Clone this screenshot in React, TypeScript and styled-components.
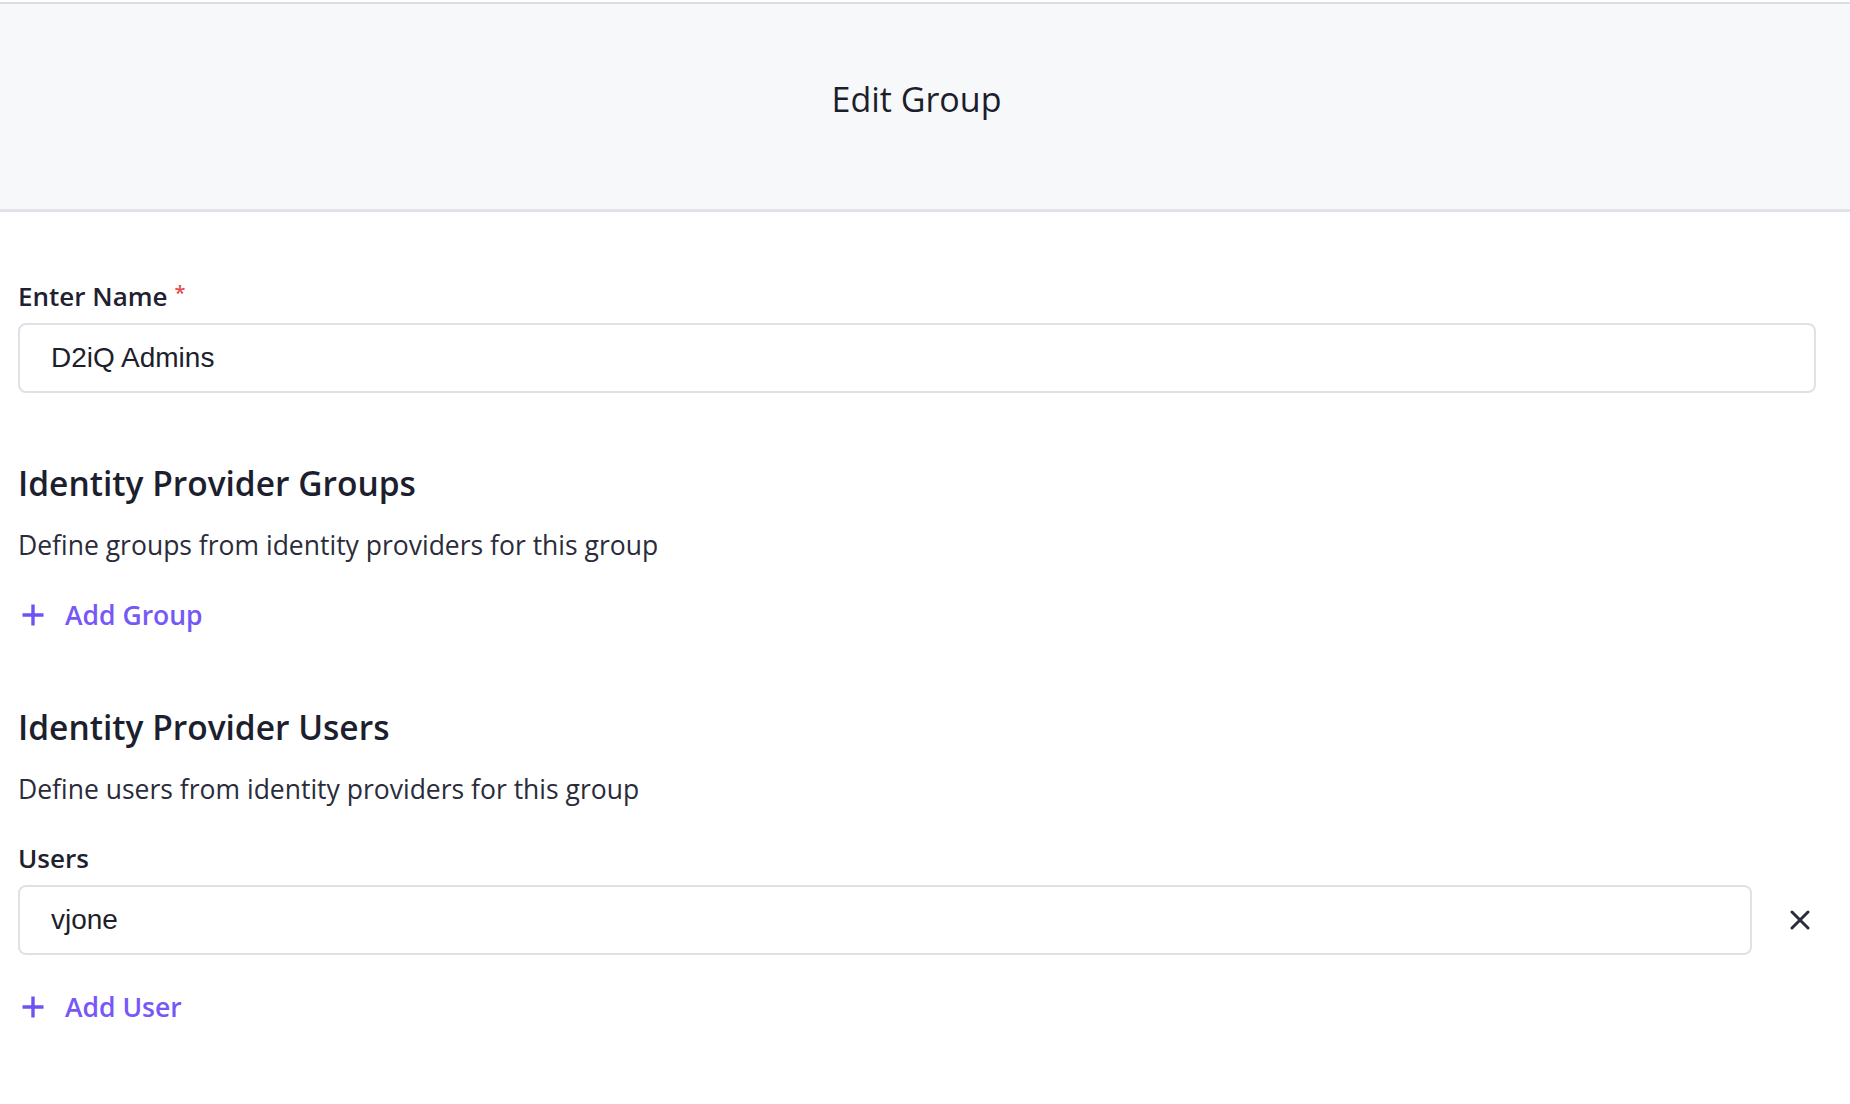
import React from "react";
import styled, { createGlobalStyle } from "styled-components";

const GlobalStyle = createGlobalStyle`
  html, body {
    margin: 0;
    padding: 0;
    background: #ffffff;
  }
  body {
    font-family: "Open Sans", "Noto Sans", sans-serif;
    color: #1d1f2e;
  }
  * { box-sizing: border-box; }
`;

const Page = styled.div`
  width: 1850px;
  min-height: 1104px;
  padding-top: 2px;
  background: #ffffff;
`;

const Header = styled.header`
  height: 210px;
  border-top: 2px solid #dcdee3;
  border-bottom: 3px solid #e0e2e7;
  background: #f7f8fa;
  display: flex;
  align-items: center;
  justify-content: center;
  padding: 0 17px 16px 0;
`;

const Title = styled.h1`
  margin: 0;
  font-size: 34px;
  font-weight: 400;
  line-height: 48px;
  color: #1c1e2d;
`;

const Form = styled.form`
  display: flex;
  flex-direction: column;
  padding: 64px 34px 0 18px;
`;

const Label = styled.label`
  display: block;
  font-size: 26px;
  font-weight: 600;
  line-height: 40px;
  color: #1f2130;
  margin-bottom: 7px;
`;

const Required = styled.span`
  color: #e5484d;
  font-size: 20px;
  vertical-align: top;
  margin-left: 7px;
  line-height: 34px;
`;

const TextInput = styled.input`
  width: 100%;
  height: 70px;
  border: 2px solid #dfe1e6;
  border-radius: 8px;
  padding: 0 0 0 31px;
  font-family: "Liberation Sans", Arial, sans-serif;
  font-size: 28px;
  color: #1d1f2b;
  background: #ffffff;
  outline: none;
`;

const Section = styled.section<{ $gap: number }>`
  display: flex;
  flex-direction: column;
  margin-top: ${(p) => p.$gap}px;
`;

const Heading = styled.h2`
  margin: 0;
  font-size: 33.5px;
  font-weight: 600;
  line-height: 48px;
  color: #1d1f2e;
`;

const Helper = styled.p`
  margin: 20px 0 0 0;
  font-size: 26.5px;
  font-weight: 400;
  line-height: 36px;
  color: #2a2c3a;
`;

const AddButton = styled.button<{ $top: number }>`
  align-self: flex-start;
  display: flex;
  align-items: center;
  gap: 20px;
  margin-top: ${(p) => p.$top}px;
  padding: 0 0 0 3px;
  border: none;
  background: transparent;
  font-family: "Open Sans", "Noto Sans", sans-serif;
  font-size: 26.5px;
  font-weight: 600;
  line-height: 40px;
  color: #7658f7;
  cursor: pointer;
`;

const FieldBlock = styled.div`
  display: flex;
  flex-direction: column;
  margin-top: 31px;
`;

const Row = styled.div`
  display: flex;
  align-items: center;
`;

const RemoveButton = styled.button`
  width: 64px;
  height: 70px;
  flex: none;
  display: flex;
  align-items: center;
  justify-content: flex-end;
  padding: 0 6px 0 0;
  border: none;
  background: transparent;
  cursor: pointer;
`;

const PlusIcon = () => (
  <svg width="24" height="24" viewBox="0 0 24 24" aria-hidden="true">
    <path d="M12 1.5v21M1.5 12h21" stroke="#6f53f2" strokeWidth="3.4" strokeLinecap="butt" fill="none" />
  </svg>
);

const CloseIcon = () => (
  <svg width="20" height="20" viewBox="0 0 20 20" aria-hidden="true">
    <path d="M2 2l16 16M18 2L2 18" stroke="#2b2d3a" strokeWidth="3" strokeLinecap="round" fill="none" />
  </svg>
);

export default function App() {
  return (
    <>
      <GlobalStyle />
      <Page>
        <Header>
          <Title>Edit Group</Title>
        </Header>
        <Form onSubmit={(e) => e.preventDefault()}>
          <Label htmlFor="group-name">
            Enter Name<Required>*</Required>
          </Label>
          <TextInput id="group-name" defaultValue="D2iQ Admins" />

          <Section $gap={66}>
            <Heading>Identity Provider Groups</Heading>
            <Helper>Define groups from identity providers for this group</Helper>
            <AddButton type="button" $top={32}>
              <PlusIcon />
              Add Group
            </AddButton>
          </Section>

          <Section $gap={68}>
            <Heading>Identity Provider Users</Heading>
            <Helper>Define users from identity providers for this group</Helper>
            <FieldBlock>
              <Label htmlFor="user-0">Users</Label>
              <Row>
                <TextInput id="user-0" defaultValue="vjone" />
                <RemoveButton type="button" aria-label="Remove user">
                  <CloseIcon />
                </RemoveButton>
              </Row>
            </FieldBlock>
            <AddButton type="button" $top={32}>
              <PlusIcon />
              Add User
            </AddButton>
          </Section>
        </Form>
      </Page>
    </>
  );
}
